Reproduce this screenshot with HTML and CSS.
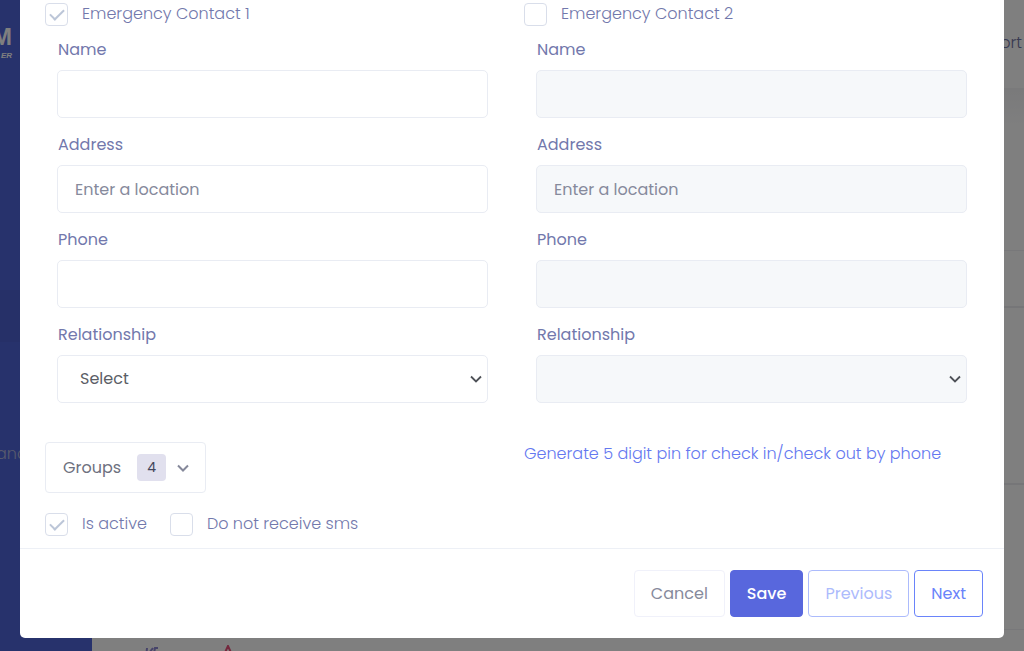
FILE: index.html
```html
<!DOCTYPE html>
<html lang="en">
<head>
  <meta charset="UTF-8" />
  <meta name="viewport" content="width=device-width, initial-scale=1.0"/>
  <title>Emergency Contacts</title>
  <link rel="stylesheet" href="styles.css">
</head>
<body>
  <div class="page">
    <nav class="sidebar">
      <div class="logo">
        <span class="logo-main">M</span>
        <span class="logo-sub">ER</span>
      </div>
      <div class="menu-item active"></div>
      <div class="menu-label">anc</div>
    </nav>
    <main class="main">
      <header class="topbar">ort</header>
      <div class="row row-filter"></div>
      <div class="row row-head"></div>
      <div class="row row-item"></div>
      <div class="row row-list"></div>
      <div class="row-actions">
        <svg class="action-edit" width="16" height="16" viewBox="0 0 16 16"><path d="M3 3 2 13M9 3 5 8M14 3h-3l-1 5"/></svg>
        <svg class="action-warn" width="16" height="16" viewBox="0 0 16 16"><path d="M8 1 2 14h12z"/></svg>
      </div>
    </main>
  </div>

  <div class="overlay">
    <form class="modal">
      <div class="modal-body">
        <section class="contact">
          <label class="check"><input type="checkbox" checked disabled>Emergency Contact 1</label>
          <div class="fields">
            <div class="field">
              <label for="name1">Name</label>
              <input type="text" id="name1">
            </div>
            <div class="field">
              <label for="address1">Address</label>
              <input type="text" id="address1" placeholder="Enter a location">
            </div>
            <div class="field">
              <label for="phone1">Phone</label>
              <input type="tel" id="phone1">
            </div>
            <div class="field">
              <label for="relationship1">Relationship</label>
              <select id="relationship1"><option>Select</option></select>
            </div>
          </div>
        </section>

        <section class="contact">
          <label class="check"><input type="checkbox">Emergency Contact 2</label>
          <div class="fields">
            <div class="field">
              <label for="name2">Name</label>
              <input type="text" id="name2" disabled>
            </div>
            <div class="field">
              <label for="address2">Address</label>
              <input type="text" id="address2" placeholder="Enter a location" disabled>
            </div>
            <div class="field">
              <label for="phone2">Phone</label>
              <input type="tel" id="phone2" disabled>
            </div>
            <div class="field">
              <label for="relationship2">Relationship</label>
              <select id="relationship2" disabled><option></option></select>
            </div>
          </div>
        </section>

        <div class="options">
          <button type="button" class="groups-button">
            Groups
            <span class="badge">4</span>
            <svg width="12" height="8" viewBox="0 0 12 8"><path d="M1 1.5l5 5 5-5"/></svg>
          </button>
          <div class="checks">
            <label class="check"><input type="checkbox" checked disabled>Is active</label>
            <label class="check"><input type="checkbox">Do not receive sms</label>
          </div>
        </div>

        <div class="pin">
          <a href="#">Generate 5 digit pin for check in/check out by phone</a>
        </div>
      </div>

      <div class="modal-footer">
        <button type="button" class="btn btn-cancel">Cancel</button>
        <button type="submit" class="btn btn-save">Save</button>
        <button type="button" class="btn btn-outline" disabled>Previous</button>
        <button type="button" class="btn btn-outline">Next</button>
      </div>
    </form>
  </div>
</body>
</html>
```

FILE: styles.css
```css
* {
  box-sizing: border-box;
}

body {
  margin: 0;
  font-family: Poppins, Inter, sans-serif;
  font-size: 16px;
  font-weight: 300;
  line-height: 24px;
  color: #7278ac;
}

button,
input,
select {
  font: inherit;
}

/* Page behind the modal */
.page {
  display: flex;
  height: 100vh;
  overflow: hidden;
  background: #fff;
}

.sidebar {
  flex: 0 0 92px;
  background: #4e64d8;
  color: #b0b4dc;
  overflow: hidden;
}

.logo {
  display: flex;
  flex-direction: column;
  align-items: flex-end;
  width: 12px;
  height: 290px;
  padding-top: 23px;
  color: #fff;
  font-family: "Liberation Sans", sans-serif;
  font-weight: bold;
}

.logo-main {
  font-size: 24px;
  line-height: 28px;
}

.logo-sub {
  font-size: 8px;
  font-style: italic;
  line-height: 10px;
}

.menu-item {
  height: 52px;
}

.menu-item.active {
  background: #4c61d0;
}

.menu-label {
  margin: 100px 0 0 -4px;
}

.main {
  flex: 1;
  display: flex;
  flex-direction: column;
}

.topbar {
  flex: 0 0 88px;
  padding: 31px 2px 0 0;
  text-align: right;
  color: #7074a4;
}

.row {
  flex: none;
  border-bottom: 1px solid #f0f0f4;
}

.row-filter {
  height: 163px;
  background: linear-gradient(#f4f4f6, #fff 40px);
}

.row-head {
  height: 57px;
  border-bottom: 2px solid #ececf0;
}

.row-item {
  height: 177px;
  border-bottom: 2px solid #ececf0;
}

.row-list {
  height: 145px;
}

.row-actions {
  display: flex;
  gap: 60px;
  padding: 15px 0 0 52px;
}

.row-actions svg {
  fill: none;
  stroke-width: 2;
}

.action-edit {
  stroke: #8f88d4;
}

.action-warn {
  stroke: #e8507a;
}

/* Modal */
.overlay {
  position: fixed;
  inset: 0;
  overflow: hidden;
  background: rgba(0, 0, 0, 0.5);
}

.modal {
  margin: 0 20px;
  background: #fff;
  border-radius: 0 0 5px 5px;
}

.modal-body {
  display: grid;
  grid-template-columns: 1fr 1fr;
  column-gap: 24px;
  row-gap: 39px;
  padding: 2px 25px 12px;
}

.check {
  display: flex;
  align-items: center;
  gap: 14px;
  height: 24px;
}

.check input {
  appearance: none;
  display: grid;
  place-items: center;
  width: 23px;
  height: 23px;
  margin: 0;
  border: 1px solid #d9deea;
  border-radius: 4px;
  background: #fff;
}

.check input:checked::after {
  content: "";
  width: 12px;
  height: 6px;
  margin-bottom: 3px;
  border: solid #bcc6d8;
  border-width: 0 0 2px 2px;
  transform: rotate(-45deg);
}

.fields {
  display: flex;
  flex-direction: column;
  gap: 15px;
  padding: 12px 12px 0;
}

.field {
  display: flex;
  flex-direction: column;
  gap: 8px;
}

.field label {
  padding-left: 1px;
  font-weight: 400;
}

.field input,
.field select {
  width: 100%;
  height: 48px;
  padding: 0 17px;
  border: 1px solid #e9ecf3;
  border-radius: 5px;
  background: #fff;
  color: #5b5e66;
  font-weight: 400;
  opacity: 1;
}

.field input::placeholder {
  color: #868a9c;
}

.field input:disabled,
.field select:disabled {
  background-color: #f6f8fa;
}

.field select {
  appearance: none;
  padding: 0 22px;
  background-image: url("data:image/svg+xml,%3Csvg xmlns='http://www.w3.org/2000/svg' width='12' height='8' viewBox='0 0 12 8'%3E%3Cpath d='M1 1.5l5 5 5-5' fill='none' stroke='%234f5258' stroke-width='1.8'/%3E%3C/svg%3E");
  background-repeat: no-repeat;
  background-position: right 5px center;
}

.groups-button {
  display: flex;
  align-items: center;
  height: 51px;
  padding: 0 16px 0 17px;
  border: 1px solid #e9ecf3;
  border-radius: 4px;
  background: #fff;
  color: #6e7180;
  font-weight: 400;
}

.badge {
  width: 29px;
  margin: 0 11px 0 16px;
  border-radius: 4px;
  background: #e1e0ee;
  color: #44465c;
  font-size: 14px;
  line-height: 27px;
}

.groups-button svg {
  fill: none;
  stroke: #85889a;
  stroke-width: 2;
}

.checks {
  display: flex;
  gap: 23px;
  margin-top: 19px;
}

.pin a {
  color: #6478f0;
  text-decoration: none;
}

.modal-footer {
  display: flex;
  justify-content: flex-end;
  gap: 5px;
  padding: 21px;
  border-top: 1px solid #edf0f6;
}

.btn {
  height: 47px;
  padding: 0 16px;
  border: 1px solid #6a84fa;
  border-radius: 4px;
  background: #fff;
  color: #6a84fa;
  font-weight: 400;
}

.btn-cancel {
  border-color: #f0f1fa;
  color: #868a9c;
}

.btn-save {
  border-color: #5867dd;
  background: #5867dd;
  color: #fff;
  font-weight: 500;
}

.btn:disabled {
  opacity: 0.55;
}
```
